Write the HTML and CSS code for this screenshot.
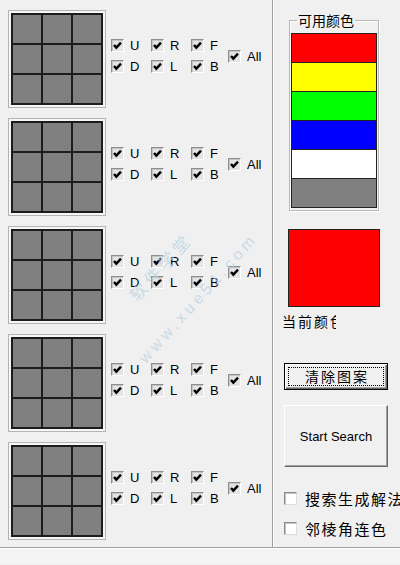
FILE: index.html
```html
<!DOCTYPE html>
<html lang="zh-CN">
<head>
  <meta charset="UTF-8" />
  <title>魔方搜索</title>
  <link rel="stylesheet" href="styles.css">
</head>
<body>
  <div class="window">
    <div class="main">
      <div class="faces" id="faces"></div>

      <div class="side">
        <fieldset class="palette">
          <legend>可用颜色</legend>
          <div class="swatches">
            <div class="swatch red"></div>
            <div class="swatch yellow"></div>
            <div class="swatch green"></div>
            <div class="swatch blue"></div>
            <div class="swatch white"></div>
            <div class="swatch gray"></div>
          </div>
        </fieldset>

        <div class="current"></div>
        <div class="current-label">当前颜色</div>

        <button class="btn btn-default"><span class="focus">清除图案</span></button>
        <button class="btn btn-big">Start Search</button>

        <label class="opt"><span class="cb cb-empty"></span>搜索生成解法</label>
        <label class="opt"><span class="cb cb-empty"></span>邻棱角连色</label>
      </div>
    </div>
    <div class="status"></div>

    <div class="watermark wm-cn">软件学堂</div>
    <div class="watermark wm-url">www.xue51.com</div>
  </div>

  <script>
    // build the five face rows (grid + U/R/F D/L/B checkboxes)
    const check = '<svg viewBox="0 0 11 11" width="11" height="11"><polyline points="2,5 4.3,7.6 9,2.6" fill="none" stroke="#000" stroke-width="2.4"/></svg>';
    const box = label => `<span class="item"><span class="cb">${check}</span>${label}</span>`;
    const faces = document.getElementById("faces");
    for (let i = 0; i < 5; i++) {
      const cells = Array(9).fill('<div class="cell"></div>').join("");
      faces.insertAdjacentHTML("beforeend", `
        <div class="face">
          <div class="frame"><div class="grid">${cells}</div></div>
          <div class="checks">
            <div class="sides">
              ${box("U")}${box("R")}${box("F")}
              ${box("D")}${box("L")}${box("B")}
            </div>
            ${box("All")}
          </div>
        </div>`);
    }
  </script>
</body>
</html>
```

FILE: styles.css
```css
html, body {
  margin: 0;
  padding: 0;
  overflow: hidden;
}

body {
  background: #f0f0f0;
  font-family: "Liberation Sans", Arial, "Noto Sans CJK SC", sans-serif;
  font-size: 13px;
  color: #000;
}

.window {
  position: relative;
  width: 400px;
  height: 565px;
  overflow: hidden;
}

.main {
  display: flex;
  height: 547px;
}

.status {
  height: 16px;
  border-top: 1px solid #a0a0a0;
  box-shadow: inset 0 1px 0 #fff;
  background: #f4f4f4;
}

/* left column with the cube faces */
.faces {
  width: 273px;
  padding: 10px 0 0 8px;
  box-sizing: border-box;
  border-right: 1px solid #a0a0a0;
  display: flex;
  flex-direction: column;
  gap: 10px;
}

.face {
  display: flex;
  height: 98px;
}

.frame {
  width: 98px;
  height: 98px;
  box-sizing: border-box;
  padding: 2px;
  border: 1px solid #b4b4b4;
  background: #f6f6f6;
}

.grid {
  display: grid;
  grid-template-columns: repeat(3, 28px);
  grid-template-rows: repeat(3, 28px);
  gap: 2px;
  padding: 2px;
  background: #1c1c1c;
}

.cell {
  background: #808080;
}

.checks {
  display: flex;
  align-items: center;
  margin-left: 5px;
  height: 92px;
}

.sides {
  display: grid;
  grid-template-columns: 40px 40px 37px;
  row-gap: 8px;
}

.item {
  display: flex;
  align-items: center;
  gap: 6px;
  height: 13px;
  line-height: 13px;
}

.cb {
  width: 13px;
  height: 13px;
  box-sizing: border-box;
  border: 1px solid;
  border-color: #8e8e8e #ffffff #ffffff #8e8e8e;
  background: #e4e4e4;
  box-shadow: inset 1px 1px 0 #c4c4c4;
  display: flex;
  align-items: center;
  justify-content: center;
  flex: none;
}

.cb-empty {
  background: #fff;
  border-color: #8c8c8c #dcdcdc #dcdcdc #8c8c8c;
  box-shadow: inset 1px 1px 0 #c4c4c4;
}

/* right column */
.side {
  width: 126px;
  border-left: 1px solid #fff;
  display: flex;
  flex-direction: column;
  align-items: flex-start;
}

.palette {
  margin: 12px 0 0 15px;
  width: 90px;
  box-sizing: border-box;
  min-width: 0;
  padding: 5px 3px 2px 1px;
  border: 1px solid #b8b8b8;
  box-shadow: 1px 1px 0 #fff, inset 1px 1px 0 #fff;
}

.palette legend {
  font-family: "Noto Sans CJK SC", sans-serif;
  font-size: 14px;
  line-height: 16px;
  padding: 0 1px;
  margin-left: 6px;
}

.swatches {
  width: 84px;
  border: 1px solid #222;
  border-bottom: none;
}

.swatch {
  height: 28px;
  border-bottom: 1px solid #222;
}

.red { background: #ff0000; }
.yellow { background: #ffff00; }
.green { background: #00ff00; }
.blue { background: #0000ff; }
.white { background: #ffffff; }
.gray { background: #808080; }

.current {
  margin: 18px 0 0 14px;
  width: 92px;
  height: 78px;
  box-sizing: border-box;
  border: 1px solid #222;
  background: #ff0000;
}

/* the label is clipped by its static box in the original window */
.current-label {
  margin: 6px 0 0 8px;
  width: 54px;
  overflow: hidden;
  white-space: nowrap;
  font-family: "Noto Sans CJK SC", sans-serif;
  font-size: 14px;
  line-height: 16px;
  letter-spacing: 2px;
}

.btn {
  margin: 0 0 0 10px;
  width: 104px;
  padding: 0;
  background: #f0f0f0;
  color: #000;
  font: inherit;
  cursor: pointer;
}

.btn-default {
  margin-top: 34px;
  height: 27px;
  border: 1px solid #000;
  box-shadow: inset 1px 1px 0 #fff, inset -1px -1px 0 #696969, inset -2px -2px 0 #a0a0a0;
  padding: 3px;
}

.btn-default .focus {
  display: block;
  height: 17px;
  border: 1px dotted #000;
  font-family: "Noto Sans CJK SC", sans-serif;
  font-size: 14px;
  line-height: 17px;
  letter-spacing: 2px;
  text-indent: 2px;
}

.btn-big {
  margin-top: 15px;
  height: 62px;
  border: 1px solid;
  border-color: #fff #696969 #696969 #fff;
  box-shadow: inset -1px -1px 0 #a0a0a0;
  font-size: 13px;
}

.opt {
  display: flex;
  align-items: center;
  gap: 8px;
  margin-left: 10px;
  height: 16px;
  white-space: nowrap;
  font-family: "Noto Sans CJK SC", sans-serif;
  font-size: 15px;
  letter-spacing: 1.5px;
}

.opt:first-of-type {
  margin-top: 23px;
}

.opt + .opt {
  margin-top: 14px;
}

/* faint diagonal watermark over the page */
.watermark {
  position: absolute;
  color: #b9d3e6;
  opacity: 0.7;
  transform: rotate(-48deg);
  transform-origin: left center;
  white-space: nowrap;
  pointer-events: none;
}

.wm-cn {
  left: 132px;
  top: 285px;
  font-family: "Noto Sans CJK SC", sans-serif;
  font-size: 17px;
  letter-spacing: 4px;
}

.wm-url {
  left: 142px;
  top: 352px;
  font-family: "Liberation Sans", sans-serif;
  font-size: 16px;
  letter-spacing: 4px;
}
```
